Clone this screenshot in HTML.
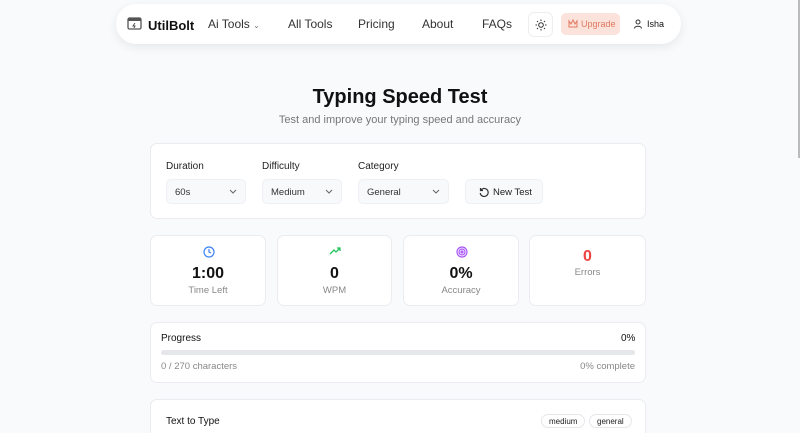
<!DOCTYPE html>
<html><head><style>
*{box-sizing:border-box;margin:0;padding:0}
html,body{width:800px;height:433px;overflow:hidden}
body{background:#f8fafc;font-family:"Liberation Sans",sans-serif;color:#111;position:relative}
.a{position:absolute}
.nav{left:116px;top:4px;width:565px;height:40px;background:#fff;border-radius:20px;box-shadow:0 3px 10px rgba(0,0,0,.08)}
.nl{font-size:12px;color:#333;top:17px}
.card{background:#fff;border:1px solid #ececf0;border-radius:7px}
.lbl{font-size:10px;color:#222}
.sel{height:25px;background:#f8f9fb;border:1px solid #eef0f3;border-radius:5px;font-size:9.5px;color:#333;padding:7px 0 0 8px}
.sel svg{position:absolute;right:8px;top:9px}
.num{font-size:16px;font-weight:bold;text-align:center;width:100%}
.sub{font-size:9.5px;color:#888;text-align:center;width:100%}
.pill{height:14px;border:1px solid #e5e7eb;border-radius:7px;font-size:8px;padding:2px 7px 0;color:#222}
</style></head><body>
<div class="a" style="left:798px;top:0;width:2px;height:158px;background:#bbb"></div>
<div class="a nav">
 <svg class="a" style="left:11px;top:13px" width="15" height="13" viewBox="0 0 15 13"><rect x="1" y="1" width="13" height="11" rx="1.5" fill="none" stroke="#555" stroke-width="1.3"/><rect x="1" y="1" width="13" height="3" fill="#555"/><path d="M8 6 L6 9 H8 L7 11" stroke="#555" fill="none"/></svg>
 <div class="a" style="left:32px;top:14px;font-size:13px;font-weight:bold">UtilBolt</div>
 <div class="a nl" style="left:92px;top:13px">Ai Tools <span style="font-size:8px;color:#777">&#8964;</span></div>
 <div class="a nl" style="left:172px;top:13px">All Tools</div>
 <div class="a nl" style="left:242px;top:13px">Pricing</div>
 <div class="a nl" style="left:306px;top:13px">About</div>
 <div class="a nl" style="left:366px;top:13px">FAQs</div>
 <div class="a" style="left:412px;top:8px;width:25px;height:25px;border:1px solid #eee;border-radius:6px;background:#fff"><svg class="a" style="left:6px;top:6px" width="12" height="12" viewBox="0 0 12 12" stroke="#333" fill="none"><circle cx="6" cy="6" r="2.3"/><path d="M6 0.5v1.5M6 10v1.5M0.5 6h1.5M10 6h1.5M2 2l1 1M9 9l1 1M2 10l1-1M9 3l1-1"/></svg></div>
 <div class="a" style="left:445px;top:9px;width:59px;height:22px;background:#fbe3dc;border-radius:5px;font-size:9px;color:#e0785f;padding:6px 0 0 20px">Upgrade<svg class="a" style="left:7px;top:6px" width="10" height="9" viewBox="0 0 10 9" fill="none" stroke="#e0785f"><path d="M1 2l2 3 2-4 2 4 2-3v6H1z"/></svg></div>
 <svg class="a" style="left:518px;top:15px" width="8" height="10" viewBox="0 0 8 10" fill="none" stroke="#333"><circle cx="4" cy="3" r="2"/><path d="M0.5 9.5c0-3 7-3 7 0"/></svg>
 <div class="a" style="left:531px;top:15px;font-size:9px">Isha</div>
</div>
<div class="a" style="left:0;width:800px;top:86px;text-align:center;font-size:20px;font-weight:bold">Typing Speed Test</div>
<div class="a" style="left:0;width:800px;top:114px;text-align:center;font-size:11px;color:#777">Test and improve your typing speed and accuracy</div>

<div class="a card" style="left:150px;top:143px;width:496px;height:76px"></div>
<div class="a lbl" style="left:166px;top:161px">Duration</div>
<div class="a lbl" style="left:262px;top:161px">Difficulty</div>
<div class="a lbl" style="left:358px;top:161px">Category</div>
<div class="a sel" style="left:166px;top:179px;width:80px">60s<svg width="8" height="5" viewBox="0 0 8 5" fill="none" stroke="#666"><path d="M1 1l3 3 3-3"/></svg></div>
<div class="a sel" style="left:262px;top:179px;width:80px">Medium<svg width="8" height="5" viewBox="0 0 8 5" fill="none" stroke="#666"><path d="M1 1l3 3 3-3"/></svg></div>
<div class="a sel" style="left:358px;top:179px;width:91px">General<svg width="8" height="5" viewBox="0 0 8 5" fill="none" stroke="#666"><path d="M1 1l3 3 3-3"/></svg></div>
<div class="a sel" style="left:465px;top:179px;width:78px;padding-left:27px;color:#222">New Test<svg style="left:13px;right:auto;top:7px" width="10" height="10" viewBox="0 0 10 10" fill="none" stroke="#333" stroke-width="1.2"><path d="M2 3A4 4 0 1 1 1.2 6M1.5 1v2.5H4"/></svg></div>

<div class="a card" style="left:150px;top:235px;width:116px;height:71px"><svg class="a" style="left:52px;top:10px" width="12" height="12" viewBox="0 0 12 12" fill="none" stroke="#3b82f6" stroke-width="1.2"><circle cx="6" cy="6" r="5"/><path d="M6 3v3l2 1"/></svg><div class="a num" style="top:29px">1:00</div><div class="a sub" style="top:49px">Time Left</div></div>
<div class="a card" style="left:277px;top:235px;width:115px;height:71px"><svg class="a" style="left:51px;top:11px" width="13" height="8" viewBox="0 0 13 8" fill="none" stroke="#22c55e" stroke-width="1.3"><path d="M1 7l4-4 2 2 4-4M8 1h3v3"/></svg><div class="a num" style="top:29px">0</div><div class="a sub" style="top:49px">WPM</div></div>
<div class="a card" style="left:403px;top:235px;width:116px;height:71px"><svg class="a" style="left:52px;top:10px" width="12" height="12" viewBox="0 0 12 12" fill="none" stroke="#a855f7" stroke-width="1.2"><circle cx="6" cy="6" r="5"/><circle cx="6" cy="6" r="3"/><circle cx="6" cy="6" r="1"/></svg><div class="a num" style="top:29px">0%</div><div class="a sub" style="top:49px">Accuracy</div></div>
<div class="a card" style="left:529px;top:235px;width:117px;height:71px"><div class="a num" style="top:12px;color:#ef4444">0</div><div class="a sub" style="top:31px">Errors</div></div>

<div class="a card" style="left:150px;top:322px;width:496px;height:61px"></div>
<div class="a" style="left:161px;top:333px;font-size:10px">Progress</div>
<div class="a" style="left:621px;top:333px;font-size:10px">0%</div>
<div class="a" style="left:161px;top:350px;width:474px;height:5px;background:#e5e7eb;border-radius:3px"></div>
<div class="a" style="left:161px;top:361px;font-size:9.5px;color:#888">0 / 270 characters</div>
<div class="a" style="left:560px;width:75px;text-align:right;top:361px;font-size:9.5px;color:#888">0% complete</div>

<div class="a card" style="left:150px;top:399px;width:496px;height:50px"></div>
<div class="a" style="left:166px;top:416px;font-size:10px">Text to Type</div>
<div class="a pill" style="left:541px;top:414px">medium</div>
<div class="a pill" style="left:589px;top:414px">general</div>
</body></html>
